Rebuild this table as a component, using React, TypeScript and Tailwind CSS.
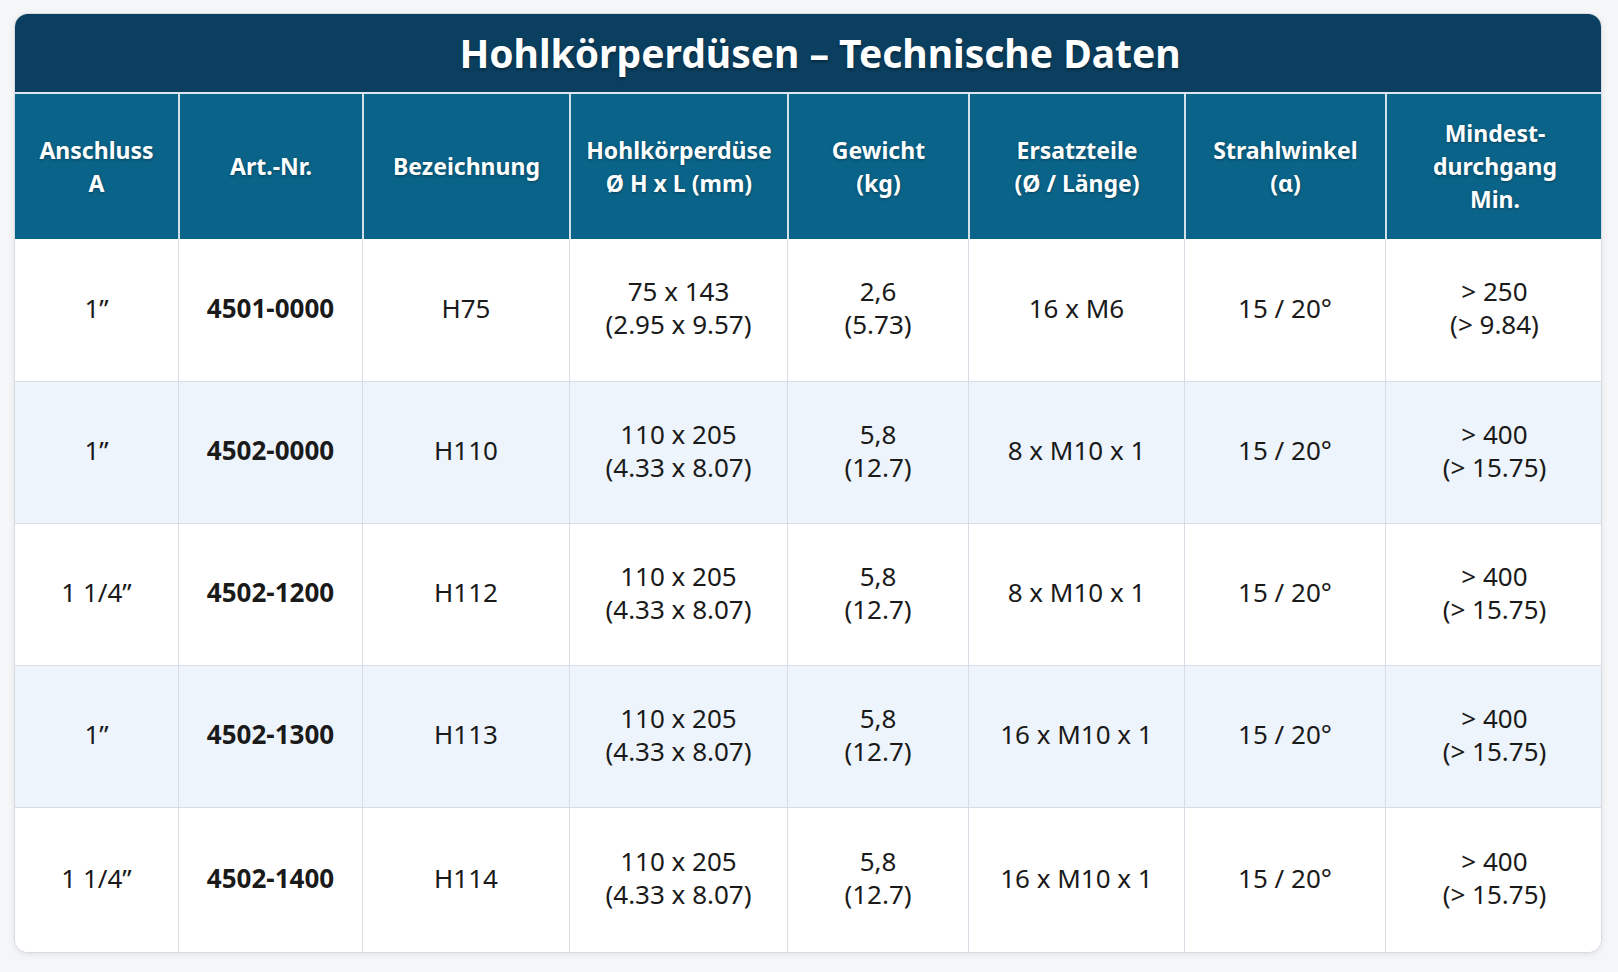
const cols = "grid-cols-[163px_184px_207px_218px_181px_216px_201px_218px]";

const headers: string[][] = [
  ["Anschluss", "A"],
  ["Art.-Nr."],
  ["Bezeichnung"],
  ["Hohlkörperdüse", "Ø H x L (mm)"],
  ["Gewicht", "(kg)"],
  ["Ersatzteile", "(Ø / Länge)"],
  ["Strahlwinkel", "(α)"],
  ["Mindest-", "durchgang", "Min."],
];

type Row = {
  anschluss: string;
  art: string;
  name: string;
  size: string[];
  weight: string[];
  parts: string;
  angle: string;
  min: string[];
};

const rows: Row[] = [
  {
    anschluss: "1”",
    art: "4501-0000",
    name: "H75",
    size: ["75 x 143", "(2.95 x 9.57)"],
    weight: ["2,6", "(5.73)"],
    parts: "16 x M6",
    angle: "15 / 20°",
    min: ["> 250", "(> 9.84)"],
  },
  {
    anschluss: "1”",
    art: "4502-0000",
    name: "H110",
    size: ["110 x 205", "(4.33 x 8.07)"],
    weight: ["5,8", "(12.7)"],
    parts: "8 x M10 x 1",
    angle: "15 / 20°",
    min: ["> 400", "(> 15.75)"],
  },
  {
    anschluss: "1 1/4”",
    art: "4502-1200",
    name: "H112",
    size: ["110 x 205", "(4.33 x 8.07)"],
    weight: ["5,8", "(12.7)"],
    parts: "8 x M10 x 1",
    angle: "15 / 20°",
    min: ["> 400", "(> 15.75)"],
  },
  {
    anschluss: "1”",
    art: "4502-1300",
    name: "H113",
    size: ["110 x 205", "(4.33 x 8.07)"],
    weight: ["5,8", "(12.7)"],
    parts: "16 x M10 x 1",
    angle: "15 / 20°",
    min: ["> 400", "(> 15.75)"],
  },
  {
    anschluss: "1 1/4”",
    art: "4502-1400",
    name: "H114",
    size: ["110 x 205", "(4.33 x 8.07)"],
    weight: ["5,8", "(12.7)"],
    parts: "16 x M10 x 1",
    angle: "15 / 20°",
    min: ["> 400", "(> 15.75)"],
  },
];

function Lines({ lines }: { lines: string[] }) {
  return (
    <div className="flex flex-col items-center">
      {lines.map((l, i) => (
        <span key={i}>{l}</span>
      ))}
    </div>
  );
}

export default function App() {
  return (
    <div className="min-h-screen bg-[#f5f6f8] pt-[13px] pl-[14px] font-['Noto_Sans',sans-serif]">
      <div className="w-[1588px] overflow-hidden rounded-[14px] border border-[#d6dbe2] bg-white shadow-[0_2px_6px_rgba(0,0,0,0.08)]">
        {/* Titel */}
        <div className="flex h-[80px] items-center justify-center border-b-2 border-[#dce6ee] bg-[#0b3f5f] pl-6">
          <h1 className="text-[39px] font-bold text-white [text-shadow:0_2px_3px_rgba(0,0,0,0.35)]">
            Hohlkörperdüsen – Technische Daten
          </h1>
        </div>

        {/* Kopfzeile */}
        <div className={`grid ${cols} h-[145px] bg-[#0a6489]`}>
          {headers.map((h, i) => (
            <div
              key={i}
              className={`flex items-center justify-center text-center text-[23px] leading-[33px] font-bold text-white [text-shadow:0_1px_3px_rgba(0,0,0,0.35)] ${
                i > 0 ? "border-l-2 border-[#d3e0e9]" : ""
              }`}
            >
              <Lines lines={h} />
            </div>
          ))}
        </div>

        {/* Daten */}
        {rows.map((r, ri) => (
          <div
            key={ri}
            className={`grid ${cols} ${ri === rows.length - 1 ? "h-[145px]" : "h-[142px]"} ${
              ri % 2 === 1 ? "bg-[#eef4fb]" : "bg-white"
            } ${ri > 0 ? "border-t border-[#d8dde5]" : ""} text-[26px] leading-[33px] text-[#1a1a1a]`}
          >
            <div className="flex items-center justify-center pb-1">{r.anschluss}</div>
            <div className="flex items-center justify-center border-l border-[#d8dde5] pb-1 font-bold">{r.art}</div>
            <div className="flex items-center justify-center border-l border-[#d8dde5] pb-1">{r.name}</div>
            <div className="flex items-center justify-center border-l border-[#d8dde5] pb-1">
              <Lines lines={r.size} />
            </div>
            <div className="flex items-center justify-center border-l border-[#d8dde5] pb-1">
              <Lines lines={r.weight} />
            </div>
            <div className="flex items-center justify-center border-l border-[#d8dde5] pb-1">{r.parts}</div>
            <div className="flex items-center justify-center border-l border-[#d8dde5] pb-1">{r.angle}</div>
            <div className="flex items-center justify-center border-l border-[#d8dde5] pb-1">
              <Lines lines={r.min} />
            </div>
          </div>
        ))}
      </div>
    </div>
  );
}
